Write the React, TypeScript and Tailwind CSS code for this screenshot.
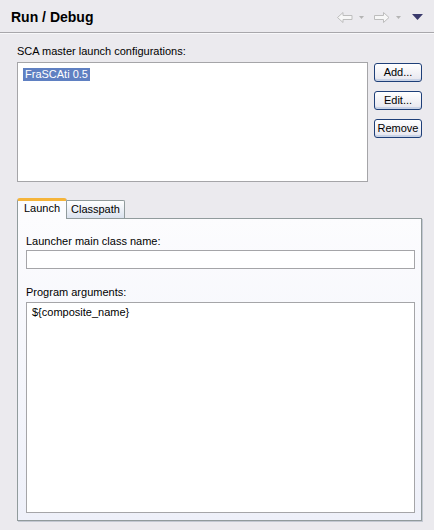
// Run / Debug preference page
import React from 'react';

function NavArrow({ dir }: { dir: 'left' | 'right' }) {
  const pts = dir === 'left'
    ? '0.5,5.5 6,0.5 6,3.5 15,3.5 15,7.5 6,7.5 6,10.5'
    : '15,5.5 9.5,0.5 9.5,3.5 0.5,3.5 0.5,7.5 9.5,7.5 9.5,10.5';
  return (
    <svg width="16" height="11" viewBox="0 0 16 11">
      <polygon points={pts} fill="#f7f7f7" stroke="#bdbdbd" strokeWidth="1" />
    </svg>
  );
}

function SmallDrop({ color }: { color: string }) {
  return (
    <svg width="5" height="3" viewBox="0 0 5 3">
      <polygon points="0,0 5,0 2.5,3" fill={color} />
    </svg>
  );
}

function XpButton({ label }: { label: string }) {
  return (
    <button className="w-[48px] h-[19px] rounded-[3px] border border-[#1e3f78] bg-gradient-to-b from-white to-[#e6e6ee] shadow-[inset_0_-2px_0_#c9d3e6,inset_0_1px_0_#fff] text-[11px] leading-[15px] text-black">
      {label}
    </button>
  );
}

export default function App() {
  return (
    <div className="w-[434px] h-[530px] bg-[#ebeaee] font-['Liberation_Sans',Arial,sans-serif] text-[11px] text-black overflow-hidden">
      {/* Header */}
      <div className="h-[33px] flex items-center justify-between pl-[11px] pr-[11px] border-b border-[#a8a7ab] shadow-[0_1px_0_#f8f8fa]">
        <div className="text-[14px] font-bold leading-[16px] pt-[2px]">Run / Debug</div>
        <div className="flex items-center pt-[2px]">
          <NavArrow dir="left" />
          <div className="ml-[6px]"><SmallDrop color="#b4b4b4" /></div>
          <div className="ml-[10px]"><NavArrow dir="right" /></div>
          <div className="ml-[6px]"><SmallDrop color="#b4b4b4" /></div>
          <svg className="ml-[11px]" width="11" height="6" viewBox="0 0 11 6">
            <polygon points="0,0 11,0 5.5,6" fill="#3a3a6c" />
          </svg>
        </div>
      </div>

      <div className="pl-[17px] pr-[11px] pt-[12px]">
        <div className="leading-[13px] h-[13px]">SCA master launch configurations:</div>
        <div className="mt-[4px] flex gap-[6px]">
          <div className="w-[351px] shrink-0 h-[120px] border border-[#a5a5a8] bg-white pl-[5px] pt-[3px]">
            <span className="inline-block bg-[#5f80c2] text-white h-[13px] leading-[13px] px-[2px]">FraSCAti 0.5</span>
          </div>
          <div className="flex flex-col gap-[9px] mt-[1px]">
            <XpButton label="Add..." />
            <XpButton label="Edit..." />
            <XpButton label="Remove" />
          </div>
        </div>

        {/* Tab folder */}
        <div className="mt-[16px] w-[405px]">
          <div className="flex items-end h-[20px] relative z-10">
            <div className="h-[21px] w-[50px] -mb-[1px] rounded-t-[3px] border-x border-[#919b9c] border-t-[3px] border-t-[#f5b43a] bg-[#fcfcfe] pl-[6px] leading-[15px]">
              Launch
            </div>
            <div className="h-[18px] rounded-tr-[2px] border-t border-r border-[#919b9c] bg-gradient-to-b from-white to-[#dbe2ee] px-[4px] leading-[16px]">
              Classpath
            </div>
          </div>
          <div className="h-[303px] border border-[#919b9c] bg-gradient-to-b from-[#fcfcfe] to-[#eef0f9] shadow-[1px_1px_0_#c3c8d2] pl-[8px] pr-[6px] pt-[16px] pb-[7px] flex flex-col">
            <div className="leading-[13px] h-[13px]">Launcher main class name:</div>
            <div className="mt-[2px] h-[19px] border border-[#a5a5a8] bg-white" />
            <div className="mt-[17px] leading-[13px] h-[13px]">Program arguments:</div>
            <div className="mt-[3px] flex-1 border border-[#a5a5a8] bg-white pl-[5px] pt-[3px] leading-[13px]">
              {'${composite_name}'}
            </div>
          </div>
        </div>
      </div>
    </div>
  );
}
